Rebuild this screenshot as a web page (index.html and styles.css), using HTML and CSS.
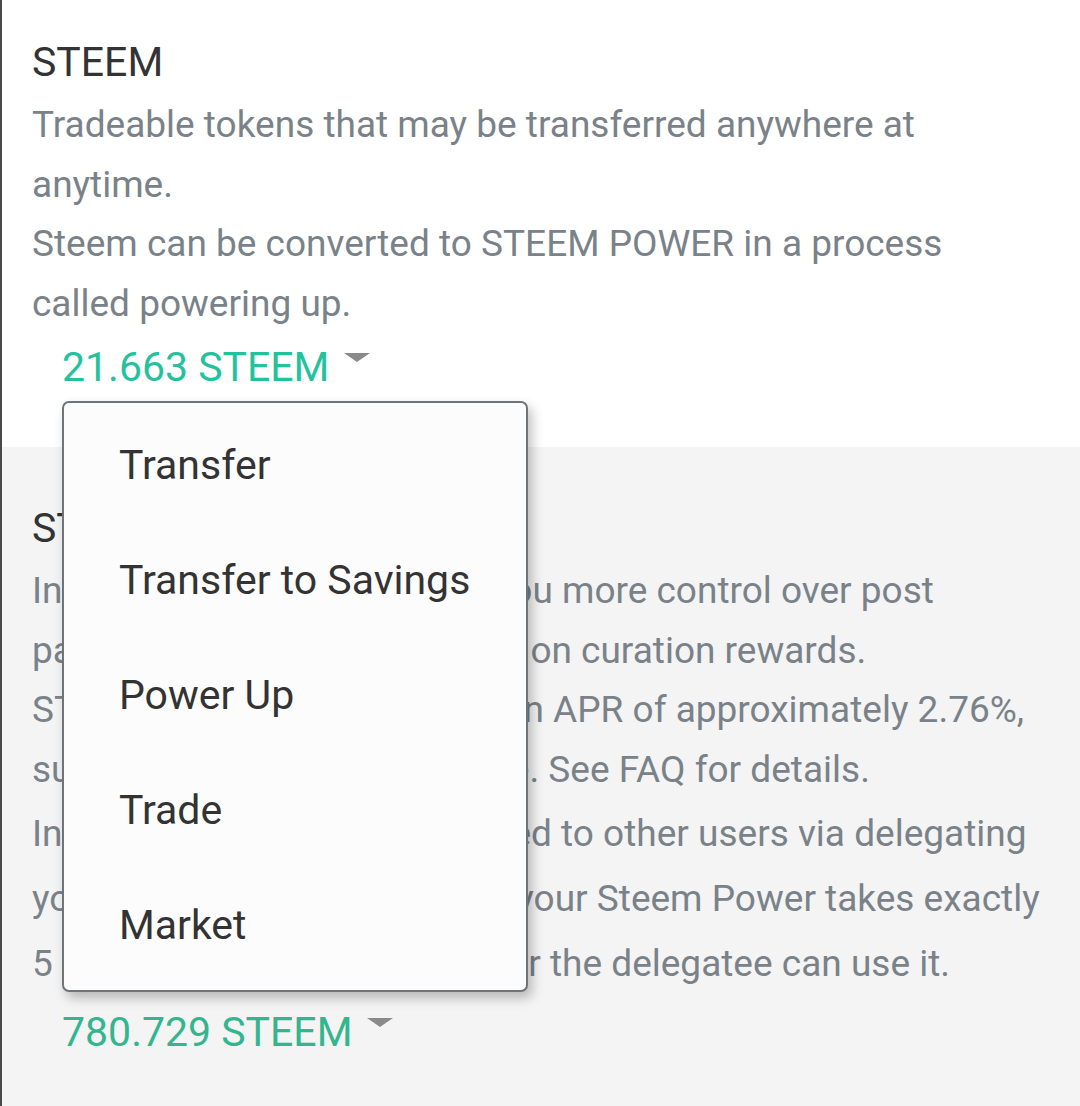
FILE: index.html
```html
<!DOCTYPE html>
<html>
<head>
  <meta charset="UTF-8">
  <title>Wallet</title>
  <link rel="stylesheet" href="styles.css">
</head>
<body>
  <div class="wallet">
    <div class="balance-row light">
      <h2 class="balance-title">STEEM</h2>
      <p class="balance-desc">
        Tradeable tokens that may be transferred anywhere at<br>
        anytime.<br>
        Steem can be converted to STEEM POWER in a process<br>
        called powering up.
      </p>
      <div class="amount">
        <span class="amount-value">21.663 STEEM</span>
        <span class="caret"></span>
      </div>

      <ul class="dropdown-menu">
        <li>Transfer</li>
        <li>Transfer to Savings</li>
        <li>Power Up</li>
        <li>Trade</li>
        <li>Market</li>
      </ul>
    </div>

    <div class="balance-row dark">
      <h2 class="balance-title">STEEM POWER</h2>
      <p class="balance-desc">
        Influence tokens which give you more control over post<br>
        payouts and allow you to earn on curation rewards.<br>
        STEEM POWER increases at an APR of approximately 2.76%,<br>
        subject to blockchain variance. See FAQ for details.
      </p>
      <p class="balance-desc wide">
        Influence can also be delegated to other users via delegating<br>
        your SPs. Then, undelegating your Steem Power takes exactly<br>
        5 days to return to you, so after the delegatee can use it.
      </p>
      <div class="amount">
        <span class="amount-value">780.729 STEEM</span>
        <span class="caret"></span>
      </div>
    </div>
  </div>
</body>
</html>
```

FILE: styles.css
```css
body {
  margin: 0;
  font-family: Roboto, "Noto Sans", sans-serif;
  background-color: #f4f4f4;
}

.wallet {
  border-left: 2px solid #4a4a4a;
  min-height: 1106px;
  box-sizing: border-box;
}

.balance-row {
  position: relative;
  padding: 38px 30px 56px 30px;
}

.balance-row.light {
  background-color: #ffffff;
}

.balance-row.dark {
  background-color: #f4f4f4;
  padding-top: 57px;
}

.balance-title {
  margin: 0 0 9px 0;
  font-size: 41px;
  line-height: 48px;
  font-weight: 400;
  color: #333333;
}

.balance-desc {
  margin: 0;
  font-size: 37px;
  line-height: 59.5px;
  color: #7a8289;
  white-space: nowrap;
}

.balance-desc.wide {
  line-height: 65px;
  margin-top: 2px;
}

.amount {
  display: flex;
  align-items: center;
  margin: 10px 0 0 30px;
  height: 48px;
}

.dark .amount {
  margin-top: 12px;
}

.amount-value {
  font-size: 41px;
  line-height: 48px;
  color: #23c29d;
}

.dark .amount-value {
  color: #33b58e;
}

.caret {
  width: 0;
  height: 0;
  margin-left: 15px;
  margin-top: -20px;
  border-left: 13px solid transparent;
  border-right: 13px solid transparent;
  border-top: 9px solid #8a8a8a;
}

.dropdown-menu {
  position: absolute;
  left: 60px;
  top: 401px;
  width: 462px;
  margin: 0;
  padding: 5px 0 7px 0;
  list-style: none;
  background-color: #fcfcfc;
  border: 2px solid #6f7479;
  border-radius: 7px;
  box-shadow: 4px 6px 12px rgba(0, 0, 0, 0.25);
  z-index: 10;
}

.dropdown-menu li {
  height: 115px;
  line-height: 115px;
  padding-left: 55px;
  font-size: 41px;
  color: #333333;
}
```
